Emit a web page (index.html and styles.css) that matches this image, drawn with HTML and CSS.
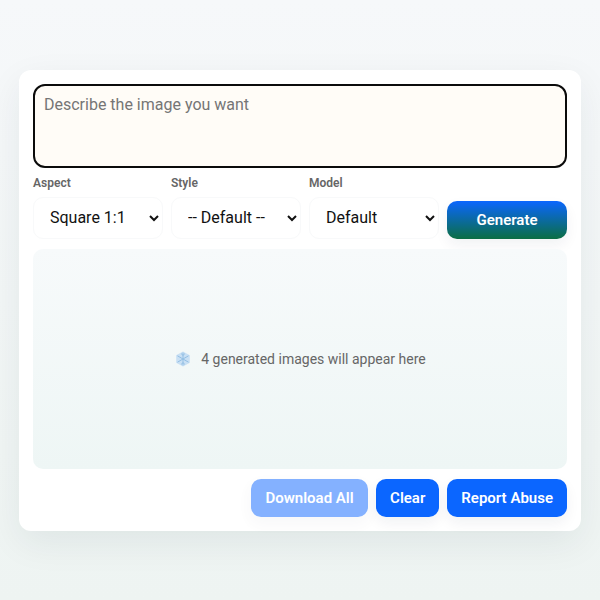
FILE: index.html
```html
<!DOCTYPE html>
<html lang="en">

<head>
    <meta charset="UTF-8">
    <meta name="viewport" content="width=device-width, initial-scale=1.0">
    <title>Image Generator</title>
    <link rel="stylesheet" href="styles.css">
</head>

<body>
    <main class="card">
        <textarea class="prompt" placeholder="Describe the image you want"></textarea>

        <div class="controls">
            <div class="field">
                <label class="field-label" for="aspect">Aspect</label>
                <select class="field-select" id="aspect">
                    <option>Square 1:1</option>
                </select>
            </div>
            <div class="field">
                <label class="field-label" for="style">Style</label>
                <select class="field-select" id="style">
                    <option>-- Default --</option>
                </select>
            </div>
            <div class="field">
                <label class="field-label" for="model">Model</label>
                <select class="field-select" id="model">
                    <option>Default</option>
                </select>
            </div>
            <button class="btn btn-generate">Generate</button>
        </div>

        <section class="preview">
            <svg class="preview-icon" viewBox="0 0 16 16" aria-hidden="true">
                <polygon points="8,0.4 14.8,4.2 14.8,11.8 8,15.6 1.2,11.8 1.2,4.2" fill="#c9e0f4" />
                <g stroke="#93bfe4" stroke-width="1" stroke-linecap="round" fill="none">
                    <path d="M8 2v12" />
                    <path d="M2.8 5l10.4 6" />
                    <path d="M13.2 5L2.8 11" />
                    <path d="M6.4 2.9L8 4.4l1.6-1.5" />
                    <path d="M6.4 13.1L8 11.6l1.6 1.5" />
                </g>
            </svg>
            <span class="preview-text">4 generated images will appear here</span>
        </section>

        <div class="actions">
            <button class="btn btn-disabled">Download All</button>
            <button class="btn">Clear</button>
            <button class="btn">Report Abuse</button>
        </div>
    </main>
</body>

</html>
```

FILE: styles.css
```css
* {
    box-sizing: border-box;
}

html,
body {
    height: 100%;
}

body {
    margin: 0;
    padding: 70px 19px 69px;
    background: linear-gradient(180deg, #f6f8fa 0%, #eef4f2 100%);
    font-family: Roboto, "Liberation Sans", sans-serif;
}

.card {
    display: flex;
    flex-direction: column;
    height: 461px;
    padding: 14px;
    background: #fff;
    border-radius: 12px;
    box-shadow: 0 12px 36px rgba(20, 40, 60, 0.07);
}

.prompt {
    display: block;
    width: 100%;
    height: 84px;
    padding: 9px;
    background: #fffcf7;
    border: 2px solid #0b0b0b;
    border-radius: 12px;
    outline: none;
    resize: none;
    font-family: inherit;
    font-size: 16px;
    line-height: 20px;
}

.prompt::placeholder {
    color: #757575;
    opacity: 1;
}

.controls {
    display: flex;
    align-items: flex-end;
    gap: 8px;
    margin-top: 8px;
}

.field {
    display: flex;
    flex-direction: column;
    width: 130px;
}

.field-label {
    height: 21px;
    color: #666;
    font-size: 12px;
    font-weight: 600;
    line-height: 14px;
}

.field-select {
    width: 100%;
    height: 42px;
    padding: 0 0 2px 12px;
    background: #fff;
    border: 1px solid #f8f9fa;
    border-radius: 10px;
    color: #111;
    font-family: inherit;
    font-size: 16px;
    outline: none;
}

.btn {
    height: 38px;
    padding: 0 14px;
    background: #0b66ff;
    border: 0;
    border-radius: 10px;
    color: #fff;
    font-family: inherit;
    font-size: 15px;
    font-weight: 600;
    box-shadow: 0 6px 14px rgba(20, 40, 60, 0.06);
}

.btn-generate {
    width: 120px;
    background: linear-gradient(180deg, #0b66ff 0%, #0b6e43 100%);
}

.btn-disabled {
    width: 117px;
    padding: 0;
    opacity: 0.5;
}

.preview {
    display: flex;
    flex: 1;
    align-items: center;
    justify-content: center;
    gap: 10px;
    margin-top: 10px;
    background: linear-gradient(180deg, #f7fafb 0%, #eef6f5 100%);
    border-radius: 10px;
}

.preview-icon {
    width: 16px;
    height: 16px;
    margin-left: 1px;
}

.preview-text {
    color: #666;
    font-size: 14px;
}

.actions {
    display: flex;
    justify-content: flex-end;
    gap: 8px;
    margin-top: 10px;
}
```
